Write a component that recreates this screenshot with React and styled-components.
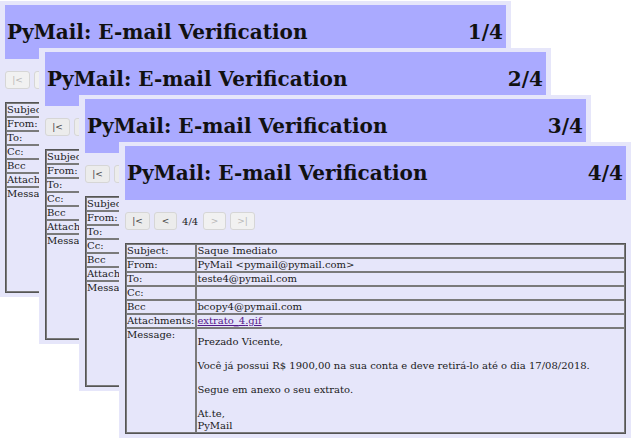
import React from "react";
import styled, { createGlobalStyle } from "styled-components";

const GlobalStyle = createGlobalStyle`
  html, body {
    margin: 0;
    padding: 0;
    background: #fff;
  }
  body {
    font-family: "DejaVu Serif", serif;
  }
`;

const Desktop = styled.div`
  position: relative;
  width: 634px;
  height: 440px;
  overflow: hidden;
  background: #fff;
`;

// each verification window sits at its own spot on the desktop
const Window = styled.div`
  position: absolute;
  left: ${(p) => p.$x}px;
  top: ${(p) => p.$y}px;
  width: 512px;
  height: 296px;
  box-sizing: border-box;
  padding: 4px 5px 0 6px;
  background: #e6e6fa;
  display: flex;
  flex-direction: column;
`;

const Header = styled.div`
  flex: none;
  height: 54px;
  background: #aaaaff;
  display: flex;
  align-items: center;
  justify-content: space-between;
  padding: 0 3px 0 2px;
  font: bold 20px "DejaVu Serif", serif;
  color: #111;
`;

const NavBar = styled.div`
  display: flex;
  align-items: center;
  gap: 4px;
  margin-top: 12px;
  height: 18px;
`;

const NavButton = styled.button`
  width: ${(p) => (p.$wide ? 25 : 23)}px;
  height: 18px;
  padding: 0;
  box-sizing: border-box;
  border: 1px solid #d6d6d6;
  border-radius: 3px;
  background: ${(p) => (p.disabled ? "#f1f1f1" : "#ececec")};
  color: ${(p) => (p.disabled ? "#b8b8b8" : "#444")};
  font: 9px "DejaVu Sans", sans-serif;
  display: flex;
  align-items: center;
  justify-content: center;
`;

const Counter = styled.span`
  font: 10px "DejaVu Serif", serif;
  color: #222;
  margin: 0 1px;
`;

const MailTable = styled.table`
  margin-top: 13px;
  width: 100%;
  border: 1px solid #555;
  border-collapse: separate;
  border-spacing: 0;
  font: 10px/12px "DejaVu Serif", serif;
  color: #1a1a1a;
`;

const Cell = styled.td`
  border: 1px solid #7a7a7a;
  padding: 0 1px 0 0;
  vertical-align: top;
  white-space: ${(p) => (p.$label ? "nowrap" : "normal")};
  width: ${(p) => (p.$label ? "1px" : "auto")};
`;

const Attachment = styled.a`
  color: #551a8b;
  text-decoration: underline;
`;

const Para = styled.p`
  margin: 12px 0 0;
  &:first-child {
    margin-top: 7px;
  }
`;

const mails = [
  { n: 1, x: -1, y: 1, amount: "1250,00", date: "14/08/2018", name: "Marcos" },
  { n: 2, x: 39, y: 48, amount: "980,00", date: "15/08/2018", name: "Ana" },
  { n: 3, x: 79, y: 95, amount: "2300,00", date: "16/08/2018", name: "Carlos" },
  { n: 4, x: 119, y: 142, amount: "1900,00", date: "17/08/2018", name: "Vicente" },
];

const MailWindow = ({ mail, total }) => {
  const first = mail.n === 1;
  const last = mail.n === total;
  return (
    <Window $x={mail.x} $y={mail.y}>
      <Header>
        <span>PyMail: E-mail Verification</span>
        <span>
          {mail.n}/{total}
        </span>
      </Header>
      <NavBar>
        <NavButton $wide disabled={first}>|&lt;</NavButton>
        <NavButton disabled={first}>&lt;</NavButton>
        <Counter>
          {mail.n}/{total}
        </Counter>
        <NavButton disabled={last}>&gt;</NavButton>
        <NavButton $wide disabled={last}>&gt;|</NavButton>
      </NavBar>
      <MailTable>
        <tbody>
          <tr>
            <Cell $label>Subject:</Cell>
            <Cell>Saque Imediato</Cell>
          </tr>
          <tr>
            <Cell $label>From:</Cell>
            <Cell>PyMail &lt;pymail@pymail.com&gt;</Cell>
          </tr>
          <tr>
            <Cell $label>To:</Cell>
            <Cell>teste{mail.n}@pymail.com</Cell>
          </tr>
          <tr>
            <Cell $label>Cc:</Cell>
            <Cell></Cell>
          </tr>
          <tr>
            <Cell $label>Bcc</Cell>
            <Cell>bcopy{mail.n}@pymail.com</Cell>
          </tr>
          <tr>
            <Cell $label>Attachments:</Cell>
            <Cell>
              <Attachment href="#">extrato_{mail.n}.gif</Attachment>
            </Cell>
          </tr>
          <tr>
            <Cell $label>Message:</Cell>
            <Cell>
              <Para>Prezado {mail.name},</Para>
              <Para>
                Você já possui R$ {mail.amount} na sua conta e deve retirá-lo até o
                dia {mail.date}.
              </Para>
              <Para>Segue em anexo o seu extrato.</Para>
              <Para>
                At.te,
                <br />
                PyMail
              </Para>
            </Cell>
          </tr>
        </tbody>
      </MailTable>
    </Window>
  );
};

export default function App() {
  return (
    <>
      <GlobalStyle />
      <Desktop>
        {mails.map((mail) => (
          <MailWindow key={mail.n} mail={mail} total={mails.length} />
        ))}
      </Desktop>
    </>
  );
}
